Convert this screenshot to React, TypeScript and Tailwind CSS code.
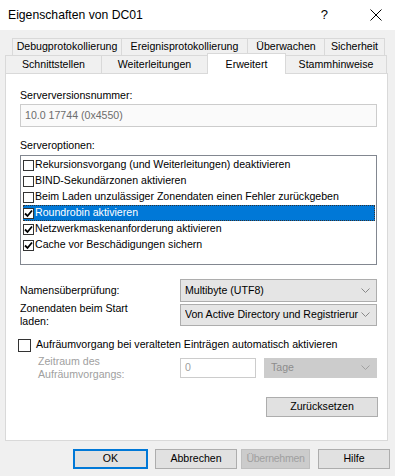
import React from 'react';

const font = { fontFamily: '"Liberation Sans", Arial, sans-serif' };

function Check({ checked }: { checked: boolean }) {
  return (
    <span className="flex h-[11px] w-[11px] shrink-0 items-center justify-center border border-[#333] bg-white">
      {checked && (
        <svg width="9" height="9" viewBox="0 0 9 9">
          <path d="M1 4.5 L3.5 7 L8 1.5" fill="none" stroke="#000" strokeWidth="1.8" />
        </svg>
      )}
    </span>
  );
}

function Chevron({ color = '#888' }: { color?: string }) {
  return (
    <svg width="9" height="6" viewBox="0 0 9 6">
      <path d="M0.5 0.5 L4.5 4.5 L8.5 0.5" fill="none" stroke={color} strokeWidth="1" />
    </svg>
  );
}

const options = [
  { label: 'Rekursionsvorgang (und Weiterleitungen) deaktivieren', checked: false },
  { label: 'BIND-Sekundärzonen aktivieren', checked: false },
  { label: 'Beim Laden unzulässiger Zonendaten einen Fehler zurückgeben', checked: false },
  { label: 'Roundrobin aktivieren', checked: true, selected: true },
  { label: 'Netzwerkmaskenanforderung aktivieren', checked: true },
  { label: 'Cache vor Beschädigungen sichern', checked: true },
];

export default function App() {
  return (
    <div className="relative h-[476px] w-[395px] overflow-hidden bg-[#f0f0f0] text-[10.6px] text-black" style={font}>
      {/* Title bar */}
      <div className="flex h-[30px] items-center bg-white pl-[8px]">
        <span className="text-[12.2px]">Eigenschaften von DC01</span>
        <span className="ml-auto mr-[42px] text-[13px]">?</span>
        <svg width="12" height="12" viewBox="0 0 12 12" className="mr-[13px]">
          <path d="M0.5 0.5 L11.5 11.5 M11.5 0.5 L0.5 11.5" stroke="#000" strokeWidth="1" />
        </svg>
      </div>

      {/* Tabs */}
      <div className="mt-[8px] flex h-[17px] pl-[12px]">
        {[
          ['Debugprotokollierung', 'w-[110px]'],
          ['Ereignisprotokollierung', 'w-[127px]'],
          ['Überwachen', 'w-[78px]'],
          ['Sicherheit', 'w-[61px]'],
        ].map(([t, w]) => (
          <div key={t} className={`${w} -ml-px flex items-center justify-center border border-b-0 border-[#d9d9d9] first:ml-0`}>
            {t}
          </div>
        ))}
      </div>
      <div className="relative z-10 flex h-[18px] pl-[5px]">
        <div className="flex w-[97px] items-center justify-center border border-b-0 border-[#d9d9d9]">Schnittstellen</div>
        <div className="-ml-px flex w-[107px] items-center justify-center border border-b-0 border-[#d9d9d9]">Weiterleitungen</div>
        <div className="-ml-px -mt-[2px] flex h-[21px] w-[79px] items-start justify-center border border-b-0 border-[#d9d9d9] bg-white pt-[3px]">Erweitert</div>
        <div className="-ml-px flex w-[102px] items-center justify-center border border-b-0 border-[#d9d9d9]">Stammhinweise</div>
      </div>

      {/* Panel */}
      <div className="ml-[5px] h-[368px] w-[383px] border border-[#d9d9d9] bg-white pl-[14px] pr-[9px]">
        <div className="mt-[13px] leading-[16px]">Serverversionsnummer:</div>
        <div className="mt-[1px] flex h-[23px] w-[357px] items-center border border-[#cccccc] bg-[#fafafa] pl-[4px] text-[#6d6d6d]">
          10.0 17744 (0x4550)
        </div>
        <div className="mt-[10px] leading-[16px]">Serveroptionen:</div>
        <div className="mt-[2px] h-[110px] w-[357px] border border-[#828790] pt-[1px] pl-[2px] pr-[1px]">
          {options.map((o) => (
            <div
              key={o.label}
              className={`flex h-[16px] items-center gap-[1px] ${o.selected ? 'bg-[#0078d7] text-white outline-1 -outline-offset-1 outline-[#333] outline-dotted' : ''}`}
            >
              <Check checked={o.checked} />
              <span className="whitespace-nowrap">{o.label}</span>
            </div>
          ))}
        </div>

        <div className="mt-[14px] flex h-[23px] items-center">
          <span className="w-[160px]">Namensüberprüfung:</span>
          <div className="flex h-[23px] w-[197px] items-center border border-[#adadad] bg-[#e5e5e5] pl-[4px] pr-[6px]">
            <span>Multibyte (UTF8)</span>
            <span className="ml-auto"><Chevron /></span>
          </div>
        </div>
        <div className="mt-[2px] flex h-[22px] items-center">
          <span className="w-[160px] leading-[13px]">Zonendaten beim Start<br />laden:</span>
          <div className="flex h-[22px] w-[197px] items-center border border-[#adadad] bg-[#e5e5e5] pl-[4px] pr-[6px]">
            <span className="w-[174px] overflow-hidden whitespace-nowrap">Von Active Directory und Registrierur</span>
            <span className="ml-auto"><Chevron /></span>
          </div>
        </div>

        <div className="mt-[11px] flex h-[16px] items-center gap-[5px]">
          <span className="-ml-[2px] h-[13px] w-[13px] border border-[#333] bg-white" />
          <span>Aufräumvorgang bei veralteten Einträgen automatisch aktivieren</span>
        </div>
        <div className="mt-[5px] flex h-[20px] items-center">
          <span className="w-[160px] pl-[18px] leading-[13px] text-[#a0a0a0]">Zeitraum des<br />Aufräumvorgangs:</span>
          <div className="flex h-[20px] w-[76px] items-center border border-[#cccccc] bg-white pl-[4px] text-[#a0a0a0]">0</div>
          <div className="ml-[8px] flex h-[20px] w-[113px] items-center border border-[#cccccc] bg-[#cccccc] pl-[6px] pr-[6px] text-[#8c8c8c]">
            <span>Tage</span>
            <span className="ml-auto"><Chevron color="#a0a0a0" /></span>
          </div>
        </div>

        <div className="mt-[19px] flex justify-end">
          <button className="flex h-[20px] w-[112px] items-center justify-center border border-[#adadad] bg-[#e1e1e1]">Zurücksetzen</button>
        </div>
      </div>

      {/* Footer buttons */}
      <div className="mt-[8px] flex h-[20px] pl-[73px]">
        <button className="flex w-[75px] items-center justify-center border-2 border-[#0078d7] bg-[#e1e1e1]">OK</button>
        <button className="ml-[7px] flex w-[82px] items-center justify-center border border-[#adadad] bg-[#e1e1e1]">Abbrechen</button>
        <button className="ml-[4px] flex w-[69px] items-center justify-center overflow-hidden border border-[#bfbfbf] bg-[#cccccc] tracking-[-0.3px] text-[#a0a0a0]">Übernehmen</button>
        <button className="ml-[8px] flex w-[72px] items-center justify-center border border-[#adadad] bg-[#e1e1e1]">Hilfe</button>
      </div>
    </div>
  );
}
